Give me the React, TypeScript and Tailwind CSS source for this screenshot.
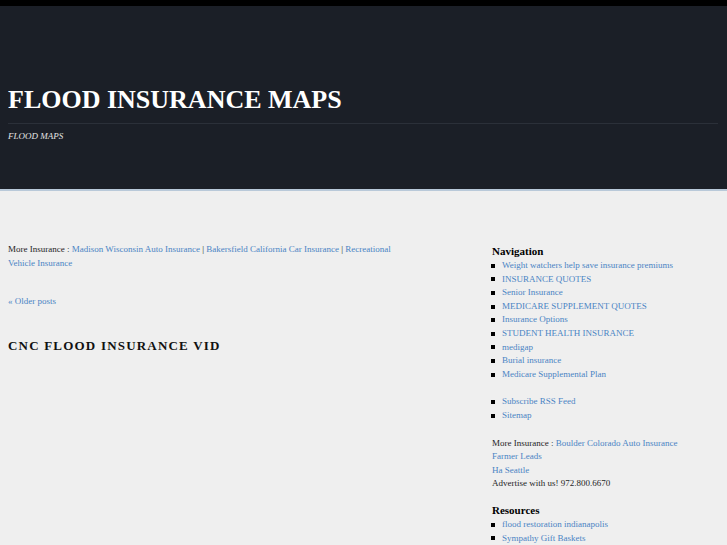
import React from "react";

const link = "text-[#4a84c4]";

function Bullet({ children }: { children: React.ReactNode }) {
  return (
    <li className="flex items-center h-[13.6px]">
      <span className="w-[4px] h-[4px] bg-black shrink-0" />
      <span className={`ml-[7px] ${link}`}>{children}</span>
    </li>
  );
}

export default function App() {
  return (
    <div className="w-[727px] h-[545px] overflow-hidden bg-[#efefef] font-['Liberation_Serif',serif] text-[#1e1e1e]">
      <div className="h-[6px] bg-black" />
      <header className="h-[185px] bg-[#1b1f27] pt-[79px] pl-2 pr-[9px] border-b-2 border-[#b9c9d9]">
        <h1 className="text-[26px] leading-[30px] font-bold text-white">FLOOD INSURANCE MAPS</h1>
        <div className="mt-[8px] border-t border-[#2b3039]" />
        <p className="mt-[5px] text-[9px] leading-[14px] italic text-[#e4e4e4]">FLOOD MAPS</p>
      </header>
      <div className="flex pl-2 pt-[52px] text-[9px] leading-[13.6px]">
        <main className="w-[392px]">
          <p>
            More Insurance : <span className={link}>Madison Wisconsin Auto Insurance</span> |{" "}
            <span className={link}>Bakersfield California Car Insurance</span> |{" "}
            <span className={link}>Recreational Vehicle Insurance</span>
          </p>
          <p className={`mt-[25px] ${link}`}>« Older posts</p>
          <h2 className="mt-[28px] text-[13px] leading-[18px] font-bold tracking-[1.2px] text-[#111]">
            CNC FLOOD INSURANCE VID
          </h2>
        </main>
        <aside className="ml-[91px] mt-px w-[236px]">
          <h3 className="pl-px text-[11px] leading-[15px] font-bold text-black">Navigation</h3>
          <ul>
            <Bullet>Weight watchers help save insurance premiums</Bullet>
            <Bullet>INSURANCE QUOTES</Bullet>
            <Bullet>Senior Insurance</Bullet>
            <Bullet>MEDICARE SUPPLEMENT QUOTES</Bullet>
            <Bullet>Insurance Options</Bullet>
            <Bullet>STUDENT HEALTH INSURANCE</Bullet>
            <Bullet>medigap</Bullet>
            <Bullet>Burial insurance</Bullet>
            <Bullet>Medicare Supplemental Plan</Bullet>
          </ul>
          <ul className="mt-[14px]">
            <Bullet>Subscribe RSS Feed</Bullet>
            <Bullet>Sitemap</Bullet>
          </ul>
          <div className="mt-[14px] pl-px">
            <p>
              More Insurance : <span className={link}>Boulder Colorado Auto Insurance</span>
            </p>
            <p className={link}>Farmer Leads</p>
            <p className={link}>Ha Seattle</p>
            <p>Advertise with us! 972.800.6670</p>
          </div>
          <h3 className="mt-[11px] pl-px text-[11px] leading-[16px] font-bold text-black">Resources</h3>
          <ul>
            <Bullet>flood restoration indianapolis</Bullet>
            <Bullet>Sympathy Gift Baskets</Bullet>
          </ul>
        </aside>
      </div>
    </div>
  );
}
